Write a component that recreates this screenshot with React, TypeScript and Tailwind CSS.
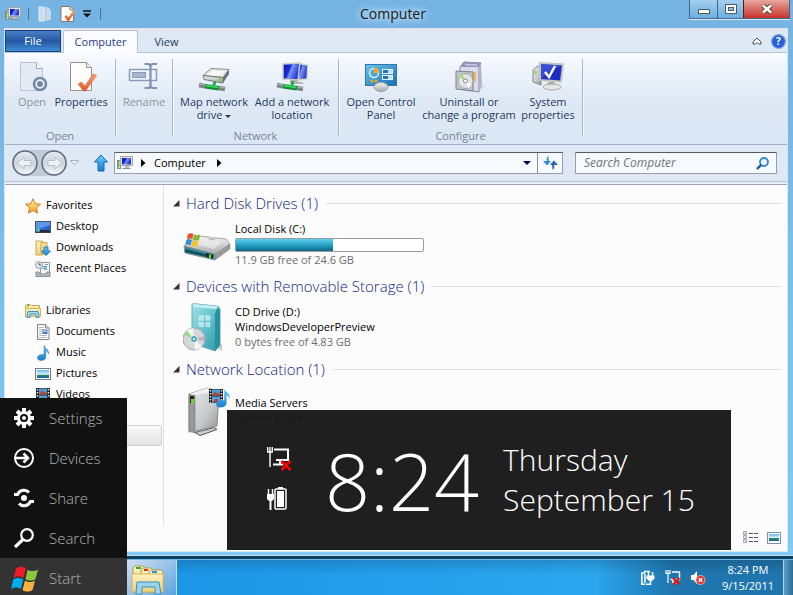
import React from "react";

type IconProps = { className?: string };

const Svg = ({ size = 16, w, h, box, children, className = "" }: { size?: number; w?: number; h?: number; box?: string; children: React.ReactNode; className?: string }) => (
  <svg width={w ?? size} height={h ?? size} viewBox={box ?? `0 0 ${w ?? size} ${h ?? size}`} className={`shrink-0 ${className}`} aria-hidden="true">
    {children}
  </svg>
);

const Defs = () => (
  <svg width="0" height="0" className="absolute" aria-hidden="true">
    <defs>
      <linearGradient id="screen" x1="0" y1="0" x2="1" y2="0.4">
        <stop offset="0" stopColor="#0812a8" />
        <stop offset="0.45" stopColor="#1730d8" />
        <stop offset="0.55" stopColor="#7d96f0" />
        <stop offset="1" stopColor="#1c35d6" />
      </linearGradient>
      <linearGradient id="metal" x1="0" y1="0" x2="0" y2="1">
        <stop offset="0" stopColor="#f4f4f4" />
        <stop offset="1" stopColor="#a6a8aa" />
      </linearGradient>
      <linearGradient id="metalH" x1="0" y1="0" x2="1" y2="1">
        <stop offset="0" stopColor="#e9e9e9" />
        <stop offset="0.6" stopColor="#c6c8ca" />
        <stop offset="1" stopColor="#8f9295" />
      </linearGradient>
      <linearGradient id="orange" x1="0" y1="0" x2="0" y2="1">
        <stop offset="0" stopColor="#f6a070" />
        <stop offset="1" stopColor="#dc5a26" />
      </linearGradient>
      <linearGradient id="blue" x1="0" y1="0" x2="0" y2="1">
        <stop offset="0" stopColor="#5fd0fb" />
        <stop offset="1" stopColor="#1a7ad0" />
      </linearGradient>
      <linearGradient id="panel" x1="0" y1="0" x2="1" y2="1">
        <stop offset="0" stopColor="#6cc3ea" />
        <stop offset="1" stopColor="#1a6fb4" />
      </linearGradient>
      <linearGradient id="folder" x1="0" y1="0" x2="0" y2="1">
        <stop offset="0" stopColor="#fdf3c0" />
        <stop offset="1" stopColor="#ecd079" />
      </linearGradient>
      <linearGradient id="teal" x1="0" y1="0" x2="1" y2="1">
        <stop offset="0" stopColor="#a6e2ea" />
        <stop offset="0.5" stopColor="#5fc0cc" />
        <stop offset="1" stopColor="#2b95a4" />
      </linearGradient>
      <linearGradient id="star" x1="0" y1="0" x2="0" y2="1">
        <stop offset="0" stopColor="#fff3a8" />
        <stop offset="1" stopColor="#f79f1c" />
      </linearGradient>
      <linearGradient id="glass" x1="0" y1="0" x2="0" y2="1">
        <stop offset="0" stopColor="#e6ebf0" />
        <stop offset="0.5" stopColor="#ccd3db" />
        <stop offset="1" stopColor="#f6f9fb" />
      </linearGradient>
      <linearGradient id="sky" x1="0" y1="0" x2="0" y2="1">
        <stop offset="0" stopColor="#5cb8ee" />
        <stop offset="0.55" stopColor="#e4f5fb" />
        <stop offset="0.6" stopColor="#2c8f5a" />
        <stop offset="1" stopColor="#1c5fa4" />
      </linearGradient>
    </defs>
  </svg>
);

/* ---------- small icons ---------- */

const ComputerIcon = () => (
  <Svg size={16}>
    <rect x="0.5" y="5.5" width="3" height="8" fill="#c9ccce" stroke="#85898c" />
    <rect x="1" y="6" width="1" height="6" fill="#58c322" />
    <rect x="3.5" y="1.5" width="12" height="9" fill="#e8e6df" stroke="#a9a7a0" />
    <rect x="5" y="3" width="9" height="6.500" fill="url(#screen)" />
    <path d="M8 11h4l.5 2H7.500z" fill="#b9bbbc" />
    <path d="M5.500 13.500h8" stroke="#8b8d8f" />
  </Svg>
);
const FolderFaded = () => (
  <Svg w={14} h={16}>
    <path d="M1 1h5v14H1z" fill="#c9dcee" stroke="#dfeaf5" />
    <path d="M6 2h5v12H6z" fill="#aecbe6" stroke="#dfeaf5" />
    <path d="M8 4h5v10H8z" fill="#c3d8ec" />
  </Svg>
);
const PropsSmall = () => (
  <Svg size={16}>
    <path d="M1 .5h9l3.500 3.500v11.500H1z" fill="#fff" stroke="#8a7868" />
    <path d="M10 .5V4h3.500" fill="#eee" stroke="#8a7868" />
    <path d="M4.500 10.500l2-1.500 2 2.500 4.500-7 2.500 1-6.500 9.500H7.500z" fill="url(#orange)" />
  </Svg>
);
const StarIcon = () => (
  <Svg size={16}>
    <path d="M8 .8l2.200 4.900 5.200.6-3.900 3.500 1.100 5.300L8 12.500l-4.600 2.600 1.100-5.300L.6 6.300l5.200-.6z" fill="url(#star)" stroke="#c5812a" strokeWidth="1" strokeLinejoin="round" />
  </Svg>
);
const DesktopIcon = () => (
  <Svg size={16}>
    <rect x="0.5" y="2.500" width="15" height="11" fill="#2a62cf" stroke="#45525f" />
    <path d="M1 3h14v3L1 11z" fill="#5d97ea" />
    <rect x="1" y="11" width="14" height="2.500" fill="#20303f" />
    <circle cx="3" cy="11" r="2" fill="#44b3f0" />
    <rect x="2" y="10" width="1" height="1" fill="#f25022" /><rect x="3" y="10" width="1" height="1" fill="#8cc63f" /><rect x="3" y="11" width="1" height="1" fill="#ffc82e" />
  </Svg>
);
const DownloadsIcon = () => (
  <Svg size={16}>
    <path d="M1 1h6l1 1v13H1z" fill="url(#folder)" stroke="#c9a74e" />
    <path d="M6 2.500h6v11H6z" fill="#f5dc8c" stroke="#c9a74e" />
    <path d="M9 7h4v4h2.500L11 15.500 6.500 11H9z" fill="url(#blue)" stroke="#1a62ad" strokeWidth=".8" />
  </Svg>
);
const RecentIcon = () => (
  <Svg size={16}>
    <path d="M5.500 1.500h9v12h-9z" fill="#f4f6f8" stroke="#8e979f" />
    <path d="M7 5.500h5M7 7.500h5M10 3.500h3" stroke="#6f9ec4" />
    <rect x="9" y="6" width="3" height="3" fill="#86b7d8" />
    <path d="M1 11h3l1 2h6l1-2h3v4.500H1z" fill="#b3b8bc" stroke="#888f95" />
    <circle cx="4" cy="4" r="3.400" fill="#eef2f5" stroke="#8796a3" />
    <path d="M4 2v2h2" stroke="#47545f" fill="none" />
  </Svg>
);
const LibrariesIcon = () => (
  <Svg size={16}>
    <path d="M.5 2.500l1-1h4l1 1h8v11H.5z" fill="url(#folder)" stroke="#c6a44c" />
    <rect x="2" y="2" width="2" height="1.500" fill="#4db848" />
    <path d="M.5 5.500h15v8H.5z" fill="url(#folder)" stroke="#d4b35a" />
    <path d="M2 14.500l1-6h10l1 6h-3V11H5v3.500z" fill="#a9dcf3" stroke="#3f93c4" />
  </Svg>
);
const DocIcon = () => (
  <Svg size={16}>
    <path d="M2.500.5h8l3.500 3.500v11.500H2.500z" fill="#fdfdfd" stroke="#7d8790" />
    <path d="M10.500.5V4H14" fill="#dfe5ea" stroke="#7d8790" />
    <path d="M4 3.500h5M4 5.500h4M4 7.500h3M4 9.500h3M4 11.500h8M4 13.500h8" stroke="#b6bcc2" />
    <rect x="7.500" y="5.500" width="5" height="4.500" fill="#3f7fb8" />
    <rect x="8.500" y="6.500" width="3" height="1.500" fill="#c8e4f5" />
  </Svg>
);
const notePath = "M9 .5c.5 2.500 5 3.500 4.500 8.500-.3-2-1.500-3-2.700-3.300V12c0 2-2 3.500-4.600 3.500C4 15.500 2.500 14.500 2.500 13c0-2 2-3.500 4.500-3.500.8 0 1.500.1 2 .4z";
const MusicIcon = () => (
  <Svg size={16}>
    <path d={notePath} fill="url(#blue)" stroke="#2a6dac" strokeWidth=".5" />
  </Svg>
);
const PicturesIcon = () => (
  <Svg size={16}>
    <rect x=".5" y="2.500" width="15" height="11" fill="#fff" stroke="#6e7b87" />
    <rect x="2" y="4" width="12" height="8" fill="url(#sky)" />
  </Svg>
);
const VideosIcon = ({ className }: IconProps) => (
  <Svg size={16} className={className}>
    <rect x="1" y="1" width="14" height="14" fill="#222" />
    <rect x="4" y="1.500" width="8" height="6" fill="#4a9be0" />
    <rect x="4" y="8.500" width="8" height="6" fill="#4fa5e6" />
    <path d="M4 7.500l3-4 2 2 1.500-1L12 7.500zM5 14l3-4 4 4z" fill="#b4472a" />
    <path d="M2.500 2v13M13.500 2v13" stroke="#e8e8e8" strokeWidth="1.500" strokeDasharray="1.500 1.500" />
  </Svg>
);

/* ---------- ribbon icons ---------- */

const NetPipe = () => (
  <>
    <path d="M1 24l6 1.200M21 27l6 1" stroke="#7f8284" strokeWidth="4.500" />
    <path d="M1 23l6 1.200M21 26l6 1" stroke="#b4b7b9" strokeWidth="1" />
    <path d="M7 25.200l14 2" stroke="#138a34" strokeWidth="4.500" />
    <path d="M8 24.600l12 1.700" stroke="#2bdc5c" strokeWidth="1.800" />
    <path d="M17 20l-1 4" stroke="#18b040" strokeWidth="3" />
  </>
);
const OpenIcon = () => (
  <Svg size={32}>
    <path d="M4.500 1.500h16l6 6v22h-22z" fill="#e4eaf4" stroke="#b8c4d8" />
    <path d="M20.500 1.500v6h6" fill="#f5f8fc" stroke="#9aaac4" />
    <circle cx="24" cy="23" r="6" fill="#eef3f9" stroke="#7488a9" strokeWidth="2.500" />
    <circle cx="24" cy="23" r="3" fill="#7488a9" />
  </Svg>
);
const PropertiesIcon = () => (
  <Svg size={32}>
    <path d="M5.500 1.500h16l5 5v23h-21z" fill="#fdfdfc" stroke="#9b8f86" />
    <path d="M21.500 1.500v5h5" fill="#eee" stroke="#9b8f86" />
    <path d="M13 23l3.500-2 3.500 4 8-12 3.500 1.500L20.500 30h-2z" fill="url(#orange)" stroke="#d96a35" strokeWidth=".6" />
  </Svg>
);
const RenameIcon = () => (
  <Svg size={32}>
    <rect x="1.500" y="8.500" width="27" height="11" fill="#eef2f9" stroke="#8b9cb9" strokeWidth="1.500" />
    <rect x="4.500" y="11.500" width="13" height="5" fill="#aab8cf" stroke="#8b9cb9" />
    <path d="M16.500 3h4.500l1.500 2 1.500-2h5M16.500 27h4.500l1.500-2 1.500 2h5M22.500 5v20" stroke="#8192b0" strokeWidth="2.200" fill="none" />
  </Svg>
);
const MapDriveIcon = () => (
  <Svg size={32}>
    <NetPipe />
    <path d="M5 14.500L13 7.500l18 1-6 8z" fill="#e6e6e6" stroke="#8c8e90" />
    <path d="M9 14l6-4.500 12 .8-4 4.700z" fill="#f8f8f8" />
    <path d="M5 14.500l20 2v5.500L6 18.500z" fill="url(#metalH)" stroke="#77797b" />
    <path d="M25 16.500l6-8v4.500l-6 9z" fill="#6f7274" />
    <rect x="21" y="17" width="2" height="3.500" fill="#6ee22e" />
  </Svg>
);
const AddLocationIcon = () => (
  <Svg size={32}>
    <path d="M20 2l12 2-1 14-8 1z" fill="url(#screen)" stroke="#d9d7cf" strokeWidth="1.500" />
    <path d="M7 3l17-1-2 17-15-1z" fill="url(#screen)" stroke="#cfcdc5" strokeWidth="1.500" />
    <path d="M14 19h8v2h4l2 2H14z" fill="#b6b6b3" />
    <NetPipe />
  </Svg>
);
const ControlPanelIcon = () => (
  <Svg size={32}>
    <rect x=".5" y="3.500" width="31" height="21" fill="url(#panel)" stroke="#2d78ad" />
    <circle cx="9" cy="12" r="4.500" fill="none" stroke="#d9f1fb" strokeWidth="1.500" />
    <path d="M9 12V6.500A5.500 5.500 0 0 1 14 12z" fill="#f8a81e" />
    <rect x="17.500" y="8.500" width="10" height="4" fill="#bfe4f5" stroke="#e6f6fc" /><rect x="18" y="9" width="5" height="3" fill="#1f75bb" />
    <rect x="17.500" y="14.500" width="10" height="4" fill="#bfe4f5" stroke="#e6f6fc" /><rect x="18" y="15" width="5" height="3" fill="#1f75bb" />
    <circle cx="7" cy="20" r="1.500" fill="#f8a81e" /><circle cx="11" cy="20" r="1.500" fill="#f8a81e" />
    <ellipse cx="16" cy="26" rx="7" ry="4.500" fill="url(#metal)" stroke="#a3a3a0" />
  </Svg>
);
const UninstallIcon = () => (
  <Svg size={32}>
    <path d="M24 27l8-3-6 6z" fill="#c9ccd6" />
    <path d="M7 6l4-5 17 1-2 4v25L7 28z" fill="#dcdcec" stroke="#8587a3" />
    <path d="M26 6l2-4 1 22-3 6z" fill="#b4b4d0" />
    <path d="M7 6l4-5 17 1-2 4z" fill="#8f93ba" />
    <path d="M12 3.500l12 .5" stroke="#c9cbe2" strokeWidth="1.500" />
    <path d="M17 12l6-1v9l-6 2z" fill="#f4b75c" />
    <path d="M3 10l17 1v19l-17-2z" fill="#c2c6ca" stroke="#7c8186" />
    <circle cx="12.500" cy="20" r="7.500" fill="#e2e5e7" stroke="#9ca0a4" />
    <path d="M12.500 20L6 16a7.500 7.500 0 0 1 3.500-3z" fill="#a8dc88" />
    <path d="M12.500 20l6.500 4a7.500 7.500 0 0 1-4 3z" fill="#fff" />
    <circle cx="12.500" cy="20" r="2" fill="#fff" stroke="#888" />
  </Svg>
);
const SystemIcon = () => (
  <Svg size={32}>
    <path d="M1 9l5-4h3v19l-8-3z" fill="url(#metalH)" stroke="#85888b" />
    <rect x="2.500" y="10" width="2" height="3" fill="#7be03a" />
    <path d="M8 2l23 1.500-2 17L8 19z" fill="#1c2fc4" stroke="#c6c4bc" strokeWidth="2" />
    <path d="M9 3l21 1.500-9 4L9 18z" fill="#4459dd" opacity=".7" />
    <path d="M13 11l4 5 6-11" fill="none" stroke="#fff" strokeWidth="2.500" />
    <path d="M16 21h6l1 3h-8z" fill="#a9a9a6" />
    <ellipse cx="20" cy="26" rx="9" ry="3" fill="#e6e6e3" stroke="#aaaaa6" />
  </Svg>
);

/* ---------- drive icons ---------- */

const Flag = () => (
  <>
    <path d="M1 6c4-3 7-3 10-1L9 14c-3-2-6-2-9 0z" fill="#e8502a" />
    <path d="M12 5.500c3 2 6 2 10 .5l-2 9c-4 1-7 1-10-1z" fill="#7cba32" />
    <path d="M-1 15c3-2 6-2 9 0l-2 9c-3-2-6-2-9-1z" fill="#2e8fe0" />
    <path d="M9.500 15.500c3 2 6 2 10 1l-2 8c-3 2-6 2-10 0z" fill="#fdc221" />
  </>
);
const DiskIcon = () => (
  <Svg w={48} h={30} className="mt-3">
    <path d="M1 14L16 4l27 3 4 5-15 11z" fill="url(#metal)" stroke="#a4a4a4" />
    <path d="M12 12l9-5 18 2-8 8z" fill="#ededed" opacity=".7" />
    <path d="M1 14l31 8v6L2 21z" fill="#3a8794" stroke="#909597" />
    <path d="M2 17l22 5.500v2.500L2 20z" fill="#0f4f5f" />
    <path d="M32 22l15-10v5L32 28z" fill="#97999b" stroke="#888" strokeWidth=".5" />
    <path d="M23 21l7 1.800v4L23 25z" fill="#222b28" />
    <rect x="26" y="22.500" width="2" height="3.500" fill="#59e91e" />
    <ellipse cx="29" cy="7" rx="4" ry="1.500" fill="#bbb" stroke="#eee" strokeWidth=".6" />
    <g transform="translate(4,-1) scale(.6)"><Flag /></g>
  </Svg>
);
const CdIcon = () => (
  <Svg w={48} h={50}>
    <path d="M34 45l5-5v8z" fill="#ccc" />
    <path d="M9 2c0-1 1-1.500 2-1.300L33 3c3 .4 4 2 4 4v35l-5 6-23-8z" fill="url(#teal)" stroke="#5cacb9" />
    <path d="M34 5c2 .5 3 1 3 3v34l-5 6V11z" fill="#2791a0" />
    <path d="M10 1l23 2c2 .4 2 2 0 3L11 4z" fill="#c5eef3" />
    <g transform="translate(15,10) scale(.6)" opacity=".65">
      <path d="M1 4l9-1v10H0zM12 3l9 1v9h-9zM0 15h10v9l-9-1zM12 15h9l-1 9-8-1z" fill="#dff6f8" />
    </g>
    <circle cx="11" cy="36" r="11" fill="#d5d7d9" stroke="#a3a8ab" />
    <path d="M11 36L3 28.500A11 11 0 0 1 10 25zM11 36l8 7.500A11 11 0 0 1 12 47z" fill="#f6f6f6" />
    <path d="M11 36L1 32a11 11 0 0 1 3-4.500z" fill="#9fdb8e" />
    <path d="M11 36l10.500-3a11 11 0 0 1 0 5z" fill="#bfb3b8" />
    <circle cx="11" cy="36" r="3.500" fill="#46a6b5" stroke="#eee" />
    <circle cx="11" cy="36" r="1" fill="#fff" />
  </Svg>
);
const MediaIcon = () => (
  <div className="relative h-[52px] w-12">
    <Svg w={48} h={52}>
      <path d="M12 46.500l19-5 3 2-17 6z" fill="#ccc" stroke="#555" />
      <path d="M6 8L24 2l12 3-2 35-22 5-6 1z" fill="url(#metalH)" stroke="#8b8b8b" />
      <path d="M6 8l6 1v38l-6-2z" fill="#96989a" stroke="#777" strokeWidth=".6" />
      <path d="M6 8L24 2l12 3-24 4z" fill="#f0f0f0" />
      <rect x="7" y="10" width="4" height="7" fill="#1b2b12" />
      <rect x="8" y="13" width="3" height="4" fill="#62e423" />
    </Svg>
    <VideosIcon className="absolute left-[25px] top-0.5" />
    <Svg w={20} h={24} box="0 0 16 16" className="absolute -right-0.5 top-0">
      <path d={notePath} fill="url(#blue)" />
    </Svg>
  </div>
);

/* ---------- ribbon ---------- */

const RibbonButton = ({ icon, label, width, disabled, menu }: { icon: React.ReactNode; label: string; width: string; disabled?: boolean; menu?: boolean }) => (
  <button disabled={disabled} className={`flex ${width} flex-col items-center leading-[13px] ${disabled ? "text-[#8e939b]" : "text-[#1e395b]"}`}>
    <span className="mb-[2px] block">{icon}</span>
    <span className="whitespace-pre text-center">
      {label}
      {menu && <span className="ml-[3px] inline-block border-x-[3px] border-t-[3px] border-x-transparent border-t-[#1e395b] align-middle" />}
    </span>
  </button>
);

const RibbonGroup = ({ title, width, children }: { title: string; width: string; children: React.ReactNode }) => (
  <>
    <section aria-label={title || "Rename"} className={`flex ${width} shrink-0 flex-col justify-between`}>
      <div className="flex pt-[2px]">{children}</div>
      <div className="text-center leading-4 text-[#75839b]">{title}</div>
    </section>
    <span className="h-[77px] w-px bg-[#a7b7d2] shadow-[1px_0_0_#f4f8fd]" />
  </>
);

/* ---------- content ---------- */

const NavItem = ({ icon, label, root }: { icon: React.ReactNode; label: string; root?: boolean }) => (
  <li className={`flex h-[21px] items-center ${root ? "pl-5" : "pl-[30px]"}`}>
    <a href="#" className="flex items-center gap-[5px] text-black">
      {icon}
      {label}
    </a>
  </li>
);

const DriveGroup = ({ title, icon, children }: { title: string; icon: React.ReactNode; children: React.ReactNode }) => (
  <section className="h-[83px]">
    <h2 className="flex h-5 items-center pl-[9px] text-[15px] font-light text-[#13277f]">
      <Svg w={7} h={7} className="mr-[6px]"><path d="M6.500 0v6.500H0z" fill="#333" /></Svg>
      {title}
      <span className="ml-2 h-px flex-1 bg-[#dfe0e2]" />
    </h2>
    <div className="flex gap-1 pl-[19px]">
      <div className="w-12 shrink-0 pt-[7px]">{icon}</div>
      <div className="pt-2 leading-[15px]">{children}</div>
    </div>
  </section>
);

/* ---------- charms ---------- */

const Charm = ({ icon, label, active }: { icon: React.ReactNode; label: string; active?: boolean }) => (
  <button className={`flex w-full items-center gap-3 pl-[11px] text-left text-[15px] font-light text-[#b4b4b4] ${active ? "h-[37px] bg-[#333] pt-1" : "h-10"}`}>
    <span className="flex w-[26px] justify-center">{icon}</span>
    {label}
  </button>
);

const GearIcon = () => (
  <Svg size={20} box="0 0 20 20">
    <g stroke="#fff" strokeWidth="4">
      <path d="M10 0v20M0 10h20M3 3l14 14M17 3L3 17" />
    </g>
    <circle cx="10" cy="10" r="7" fill="#fff" />
    <circle cx="10" cy="10" r="4" fill="#111" />
    <circle cx="10" cy="10" r="2" fill="#fff" />
  </Svg>
);
const DevicesIcon = () => (
  <Svg size={20}>
    <circle cx="10" cy="10" r="9" fill="none" stroke="#fff" strokeWidth="2" />
    <path d="M1 10h12M9.500 5.500L14 10l-4.500 4.500" fill="none" stroke="#fff" strokeWidth="2.600" />
  </Svg>
);
const ShareIcon = () => (
  <Svg size={20}>
    <circle cx="10" cy="10" r="3" fill="#fff" />
    <path d="M0 6.500h3.500C6 1.500 12 1 15 4.500M20 13.500h-3.500C14 18.500 8 19 5 15.500" fill="none" stroke="#fff" strokeWidth="3" />
  </Svg>
);
const SearchCharmIcon = () => (
  <Svg size={20}>
    <circle cx="13" cy="7" r="5.800" fill="none" stroke="#fff" strokeWidth="2.200" />
    <path d="M9 11.500L1 19" stroke="#fff" strokeWidth="3.200" />
  </Svg>
);
const StartIcon = () => (
  <Svg w={27} h={26}>
    <path d="M5 2.500C8 .2 12 .2 15 2.500L12.500 12c-3-2-7-2-10 0z" fill="#ee1c25" />
    <path d="M16.500 4c3 1.500 7 1.500 10.500-.5L24.500 13c-3 2-7 2-10 0z" fill="#8cc63f" />
    <path d="M2.200 13.500c3-2 7-2 10 0L10 23c-3-2-7-2-10 0z" fill="#00adef" />
    <path d="M14 14.500c3 2 7 2 10 0L21.500 24c-3 2-7 2-10 0z" fill="#fbb040" />
  </Svg>
);

const NetworkStatus = () => (
  <Svg w={26} h={26}>
    <path d="M.7 1v5h4.600V1M3 1v20" fill="none" stroke="#fff" strokeWidth="1.400" />
    <path d="M7 3.500h14V14H9M13 14v4M6 18.500h10" fill="none" stroke="#fff" strokeWidth="2" />
    <path d="M14.500 15l9 9M23.500 15l-9 9" stroke="#f00" strokeWidth="2.500" />
  </Svg>
);
const BatteryStatus = () => (
  <Svg w={26} h={26}>
    <path d="M1.500 3v5M5.500 3v5" stroke="#fff" strokeWidth="1.500" />
    <path d="M0 8h7v5l-2 2H2l-2-2z" fill="#fff" /><path d="M3.500 15v9" stroke="#fff" strokeWidth="2" />
    <rect x="8" y="3" width="11" height="20" rx="1" fill="none" stroke="#fff" strokeWidth="1.500" />
    <rect x="10" y="5" width="7" height="16" fill="#fff" /><rect x="11" y="1" width="5" height="2" fill="#fff" />
  </Svg>
);

export default function App() {
  return (
    <div className="relative flex h-screen w-full flex-col overflow-hidden bg-[#77b7e6] font-['Open_Sans','Noto_Sans',sans-serif] text-[11px]">
      <Defs />

      {/* Explorer window */}
      <div className="flex min-h-0 flex-1 flex-col border-b border-[#c4e2f6] bg-linear-to-b from-[#74b3e2] to-[#84c8f6] pb-[3px] pl-1 pr-[5px]">
        <header className="relative flex h-7 items-start justify-between">
          <div className="flex h-7 items-center pl-[1px]">
            <ComputerIcon />
            <span className="ml-[7px] h-3 w-px bg-[#4c7390]" />
            <button aria-label="New folder" className="ml-[9px]"><FolderFaded /></button>
            <button aria-label="Properties" className="ml-2"><PropsSmall /></button>
            <button aria-label="Customize toolbar" className="ml-[7px]">
              <Svg w={8} h={8}><path d="M0 1h8" stroke="#111" strokeWidth="1.500" /><path d="M0 3.500h8L4 7.500z" fill="#111" /></Svg>
            </button>
            <span className="ml-[9px] h-3 w-px bg-[#4c7390]" />
          </div>
          <h1 className="absolute inset-x-0 top-0 pr-[6px] text-center text-[14px] leading-7 text-[#1a1a1a] [text-shadow:0_0_8px_#d6edfb,0_0_6px_#d6edfb]">Computer</h1>
          <div className="relative -mr-[2px] flex h-[19px] border border-t-0 border-[#41678a] shadow-[0_1px_0_#d5ebfa]">
            <button aria-label="Minimize" className="flex w-7 items-center justify-center border-r border-[#41678a] bg-linear-to-b from-[#a5cfee] to-[#6aaee0]">
              <Svg w={12} h={5} className="mt-1"><rect x=".5" y=".5" width="11" height="4" fill="#fff" stroke="#4c5865" /></Svg>
            </button>
            <button aria-label="Maximize" className="flex w-[26px] items-center justify-center border-r border-[#571a14] bg-linear-to-b from-[#a5cfee] to-[#6aaee0]">
              <Svg w={12} h={10}><rect x=".5" y=".5" width="11" height="9" fill="#fff" stroke="#4c5865" /><rect x="3.500" y="3.500" width="5" height="3" fill="#8fc0e6" stroke="#4c5865" /></Svg>
            </button>
            <button aria-label="Close" className="flex w-[45px] items-center justify-center bg-linear-to-b from-[#e6a79f] via-[#d97068] via-45% to-[#c63028]">
              <Svg w={12} h={10}><path d="M2 1.500l8 7M10 1.500l-8 7" stroke="#5a3a3a" strokeWidth="4.500" /><path d="M2 1.500l8 7M10 1.500l-8 7" stroke="#fff" strokeWidth="2.500" /></Svg>
            </button>
          </div>
        </header>

        <div className="flex min-h-0 flex-1 flex-col border border-t-[#e9dfda] border-b-[#d9e9f4] border-l-[#dbe6f2] border-r-[#dbe6f2] bg-[#fcfcfc]">
          {/* Tabs */}
          <div className="flex h-6 items-end border-b border-[#b4c5de] bg-[#dfe9f5] pr-[2px]" role="tablist">
            <button className="h-[22px] w-14 border border-[#1c3e79] bg-linear-to-b from-[#4a80c4] via-[#2457a3] via-50% to-[#3f8fd6] text-white">File</button>
            <button role="tab" aria-selected="true" className="-mb-px ml-[2px] h-[23px] w-[75px] rounded-t-[3px] border border-b-0 border-[#b4c5de] bg-[#fafcff] text-[#1e3a8a]">Computer</button>
            <button role="tab" aria-selected="false" className="h-[22px] w-[57px] pt-[2px] text-[#1e395b]">View</button>
            <div className="ml-auto flex h-[22px] items-center gap-[10px]">
              <button aria-label="Collapse ribbon"><Svg w={10} h={8}><path d="M1 5l4-4 4 4v2H6.500L5 5.500 3.500 7H1z" fill="#fff" stroke="#444b5c" /></Svg></button>
              <button aria-label="Help" className="flex size-[13px] items-center justify-center rounded-full bg-linear-to-b from-[#2f62d0] to-[#1f5fe0] text-[10px] font-bold text-white ring-1 ring-[#7d9fd6]">?</button>
            </div>
          </div>

          {/* Ribbon */}
          <div className="h-[92px] border-b border-[#9fb0cc] bg-linear-to-b from-[#f8fbff] via-[#dfe9f6] via-50% to-[#dbe6f4] pt-[6px]">
            <div className="flex h-full">
              <RibbonGroup title="Open" width="w-[110px]">
                <span className="w-[3px]" />
                <RibbonButton icon={<OpenIcon />} label="Open" width="w-[48px]" disabled />
                <RibbonButton icon={<PropertiesIcon />} label="Properties" width="w-[50px]" />
              </RibbonGroup>
              <RibbonGroup title="" width="w-[56px]">
                <RibbonButton icon={<RenameIcon />} label="Rename" width="w-full" disabled />
              </RibbonGroup>
              <RibbonGroup title="Network" width="w-[165px]">
                <RibbonButton icon={<MapDriveIcon />} label={"Map network\ndrive"} width="w-[82px]" menu />
                <RibbonButton icon={<AddLocationIcon />} label={"Add a network\nlocation"} width="w-[74px]" />
              </RibbonGroup>
              <RibbonGroup title="Configure" width="w-[243px]">
                <RibbonButton icon={<ControlPanelIcon />} label={"Open Control\nPanel"} width="w-[84px]" />
                <RibbonButton icon={<UninstallIcon />} label={"Uninstall or\nchange a program"} width="w-[92px]" />
                <RibbonButton icon={<SystemIcon />} label={"System\nproperties"} width="w-[66px]" />
              </RibbonGroup>
            </div>
          </div>

          {/* Address bar */}
          <div className="flex h-[37px] items-center border-b border-[#b4c1d6] bg-[#dfe9f5] pl-[7px] pr-[10px]">
            <div className="flex gap-[3px] rounded-full bg-[#c0cbd9]">
              <button aria-label="Back" disabled><Svg size={26}><circle cx="13" cy="13" r="12" fill="url(#glass)" stroke="#5f6b79" strokeWidth="1.500" /><path d="M12 7v3.500h7v5h-7V19l-6.500-6z" fill="#eef2f5" stroke="#b9c1ca" /></Svg></button>
              <button aria-label="Forward" disabled><Svg size={26}><circle cx="13" cy="13" r="12" fill="url(#glass)" stroke="#5f6b79" strokeWidth="1.500" /><path d="M14 7v3.500H7v5h7V19l6.500-6z" fill="#eef2f5" stroke="#b9c1ca" /></Svg></button>
            </div>
            <button aria-label="Recent locations" className="ml-[3px]"><Svg w={9} h={6}><path d="M.5.5h8l-4 4.500z" fill="#f4f7fa" stroke="#a5b0be" /></Svg></button>
            <button aria-label="Up" className="ml-[14px]"><Svg w={16} h={18}><path d="M8 1l6.500 7H11v9H5V8H1.500z" fill="url(#blue)" stroke="#1b66b8" /></Svg></button>
            <div className="ml-[5px] flex h-[22px] flex-1 items-center border border-[#9a9da3] border-t-[#56595f] bg-[#f6fafe]">
              <nav aria-label="Address" className="flex flex-1 items-center pl-[2px]">
                <ComputerIcon />
                <Svg w={5} h={8} className="ml-2"><path d="M0 0l4.500 4L0 8z" fill="#000" /></Svg>
                <a href="#" className="ml-2 text-black">Computer</a>
                <Svg w={5} h={8} className="ml-[11px]"><path d="M0 0l4.500 4L0 8z" fill="#000" /></Svg>
              </nav>
              <button aria-label="Previous locations" className="flex w-5 justify-center"><Svg w={8} h={4}><path d="M0 0h8L4 4z" fill="#00005c" /></Svg></button>
              <button aria-label="Refresh" className="flex h-full w-[25px] items-center justify-center border-l border-[#8b8e94]">
                <Svg w={15} h={14}><path d="M5.500 0C3.500 1 3.500 3 4 5H0l4 4.500L8 5H6C5.500 3 5.500 1.500 5.500 0z" fill="#2f8fd6" /><path d="M9.500 14c2-1 2-3 1.500-5H15l-4-4.500L7 9h2c.5 2 .5 3.500.5 5z" fill="#2a66b8" /></Svg>
              </button>
            </div>
            <div className="ml-3 flex h-[22px] w-[202px] items-center border border-[#9a9da3] border-t-[#56595f] bg-[#f6fafe] pr-[7px]">
              <input aria-label="Search Computer" placeholder="Search Computer" className="w-full min-w-0 bg-transparent pl-2 text-xs italic outline-none placeholder:text-[#6f7276]" />
              <Svg w={13} h={13}><circle cx="8" cy="5" r="4" fill="#eef6fd" stroke="#2f86cf" strokeWidth="1.800" /><path d="M5 8l-4 4" stroke="#1d4f9c" strokeWidth="2.400" /></Svg>
            </div>
          </div>
          <div className="h-[3px] border-b border-[#9aa5ba] bg-[#e8eff8]" />

          {/* Body */}
          <div className="flex min-h-0 flex-1">
            <ul className="w-[159px] shrink-0 border-r border-[#d6e3f1] pt-[10px]">
              <NavItem root icon={<StarIcon />} label="Favorites" />
              <NavItem icon={<DesktopIcon />} label="Desktop" />
              <NavItem icon={<DownloadsIcon />} label="Downloads" />
              <NavItem icon={<RecentIcon />} label="Recent Places" />
              <li className="h-[21px]" />
              <NavItem root icon={<LibrariesIcon />} label="Libraries" />
              <NavItem icon={<DocIcon />} label="Documents" />
              <NavItem icon={<MusicIcon />} label="Music" />
              <NavItem icon={<PicturesIcon />} label="Pictures" />
              <NavItem icon={<VideosIcon />} label="Videos" />
              <li className="h-5" />
              <li className="mr-px h-[21px] rounded-[2px] border border-[#d2d2d2] bg-linear-to-b from-[#f8f8f8] to-[#e4e4e4]" />
            </ul>
            <main className="min-w-0 flex-1 pr-[5px] pt-2">
              <DriveGroup title="Hard Disk Drives (1)" icon={<DiskIcon />}>
                <div>Local Disk (C:)</div>
                <div role="meter" aria-label="Used space" aria-valuenow={52} aria-valuemin={0} aria-valuemax={100} className="mt-[2px] h-[14px] w-[189px] rounded-[2px] border border-[#999b9e] bg-white">
                  <div className="h-full w-[52%] bg-linear-to-b from-[#5cd0ee] via-[#27a2c8] via-50% to-[#0d6687]" />
                </div>
                <div className="text-[#6d6d6d]">11.9 GB free of 24.6 GB</div>
              </DriveGroup>
              <DriveGroup title="Devices with Removable Storage (1)" icon={<CdIcon />}>
                <div>CD Drive (D:)</div>
                <div>WindowsDeveloperPreview</div>
                <div className="text-[#6d6d6d]">0 bytes free of 4.83 GB</div>
              </DriveGroup>
              <DriveGroup title="Network Location (1)" icon={<MediaIcon />}>
                <div className="pt-2">Media Servers</div>
                <div className="text-[#6d6d6d]">System Folder</div>
              </DriveGroup>
            </main>
          </div>

          {/* Status bar */}
          <div className="flex h-[25px] shrink-0 items-center justify-end gap-[8px] pb-[2px] pr-[6px]">
            <button aria-label="Details view">
              <Svg w={16} h={13}><path d="M.5.5h3v3h-3zM.5 4.500h3v3h-3zM.5 8.500h3v3h-3z" fill="#fff" stroke="#a3a9b8" /><path d="M2 1.500v1M2 5.500v1M2 9.500v1" stroke="#9a5a6a" /><path d="M6 2.500h4M11 2.500h4M6 6.500h4M11 6.500h4M6 10.500h4M11 10.500h4" stroke="#44536b" /></Svg>
            </button>
            <button aria-label="Icon view">
              <Svg w={14} h={12}><rect x=".5" y=".5" width="13" height="11" fill="#fff" stroke="#7f8fae" /><rect x="2" y="2" width="10" height="7" fill="url(#sky)" /></Svg>
            </button>
          </div>
        </div>
      </div>

      {/* Taskbar */}
      <footer className="flex h-[39px] shrink-0 border-t-[3px] border-[#0c3f5e] bg-linear-to-r from-[#178fe4] via-[#2ba6ee] via-75% to-[#1f75ad] to-85%">
        <div className="flex w-full border-t border-[#6fb6e0] bg-linear-to-b from-black/15 to-transparent to-40%">
          <button aria-label="File Explorer" className="ml-[127px] flex w-[50px] justify-center border-r border-[#c5e2f7] bg-linear-to-br from-[#cfe0f1] to-[#5ba3df] pr-2 pt-[4px]">
            <Svg w={34} h={32}>
              <path d="M2 4l2-2h8l2 2v24H2z" fill="url(#folder)" stroke="#bd9a45" /><rect x="5" y="3" width="5" height="2" fill="#2fae3c" />
              <path d="M10 6l2-2h8l2 2v20H10z" fill="url(#folder)" stroke="#bd9a45" /><rect x="13" y="5" width="4" height="2" fill="#d1342a" />
              <path d="M18 8l2-2h10l2 2v20H18z" fill="url(#folder)" stroke="#bd9a45" /><rect x="21" y="7" width="5" height="2" fill="#2a8fe0" />
              <path d="M1 10h31v18H1z" fill="url(#folder)" stroke="#d6b55b" />
              <path d="M5 30l1-12h22l2 12h-6v-7H11v7z" fill="#9bd3ee" stroke="#3d8ebd" />
            </Svg>
          </button>
          <div className="ml-auto flex items-center gap-[9px] pr-[9px] text-white">
            <Svg size={16}><path d="M5 14.200H1.800V3H5M4 1.500h6" stroke="#fff" strokeWidth="1.600" fill="none" /><path d="M5 4v9" stroke="#fff" strokeWidth="1.500" /><path d="M8.500 2v4M12.500 2v4" stroke="#fff" strokeWidth="1.500" /><path d="M6.500 5.500h8v3L12 11H9L6.500 8.500z" fill="#fff" /><path d="M10.500 10v4.200H6" stroke="#fff" strokeWidth="1.500" fill="none" /></Svg>
            <Svg size={16}><path d="M1 0v3.500h4V0M3 0v13" stroke="#fff" strokeWidth="1.200" fill="none" /><path d="M7 2h7.500v7.500H5.500M8 9.500V12.500h4" stroke="#fff" strokeWidth="1.400" fill="none" /><path d="M8 8l6.500 6.500M14.500 8L8 14.500" stroke="#e81010" strokeWidth="2" /></Svg>
            <Svg size={16}><path d="M1 5h2.500L7 1v13L3.500 10H1z" fill="#fff" /><circle cx="10.500" cy="10" r="4.500" fill="#e03030" stroke="#fbb" strokeWidth=".8" /><path d="M8.700 8.200l3.600 3.600M12.300 8.200l-3.600 3.600" stroke="#fff" strokeWidth="1.400" /></Svg>
            <div className="ml-[7px] text-center leading-4">
              <div>8:24 PM</div>
              <div>9/15/2011</div>
            </div>
          </div>
          <button aria-label="Show desktop" className="w-[10px] border-l border-[#b2d3e8] bg-linear-to-r from-[#5c9cc4] to-[#2b6c98]" />
        </div>
      </footer>

      {/* Charms menu */}
      <nav aria-label="Charms" className="absolute bottom-0 left-0 w-[127px] bg-[#111]">
        <Charm icon={<GearIcon />} label="Settings" />
        <Charm icon={<DevicesIcon />} label="Devices" />
        <Charm icon={<ShareIcon />} label="Share" />
        <Charm icon={<SearchCharmIcon />} label="Search" />
        <Charm icon={<StartIcon />} label="Start" active />
      </nav>

      {/* Clock overlay */}
      <aside className="absolute bottom-[45px] left-[227px] flex h-[140px] w-[504px] items-center bg-[#181818]/97 pl-10 font-light text-white">
        <div className="flex flex-col gap-[14px] pb-[2px]">
          <NetworkStatus />
          <BatteryStatus />
        </div>
        <div className="ml-8 text-[79px] leading-none">8:24</div>
        <div className="ml-6 text-[30px] leading-10">
          <div>Thursday</div>
          <div>September 15</div>
        </div>
      </aside>
    </div>
  );
}
